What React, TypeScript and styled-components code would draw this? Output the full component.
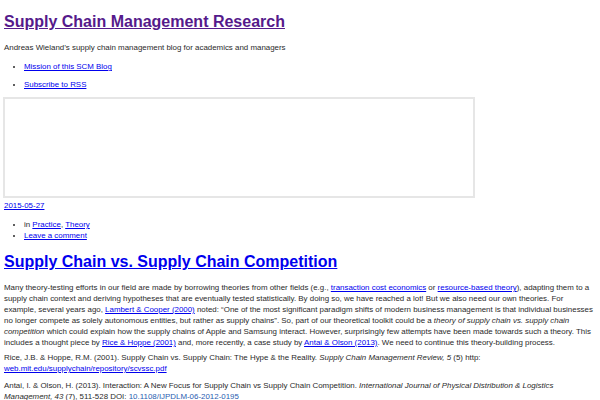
import React from "react";
import styled, { createGlobalStyle } from "styled-components";

const Global = createGlobalStyle`
  html, body { margin: 0; padding: 0; background: #fff; }
  body {
    font-family: "Liberation Sans", Arial, sans-serif;
    font-size: 7.92px;
    line-height: 11px;
    color: #2a2a2a;
  }
`;

const Page = styled.div`
  padding: 11px 4px 0 4px;
`;

const SiteTitle = styled.h1`
  margin: 0;
  font-size: 16px;
  line-height: 22px;
  font-weight: bold;
  a { color: #551a8b; text-decoration: underline; }
`;

const Tagline = styled.p`
  margin: 9px 0 0 0;
`;

const Nav = styled.ul`
  margin: 8px 0 0 0;
  padding-left: 20px;
  li { margin-bottom: 7px; }
`;

const Link = styled.a`
  color: #0000ee;
  text-decoration: underline;
`;

const Frame = styled.div`
  box-sizing: border-box;
  width: 472px;
  height: 101px;
  margin-left: -1px;
  border: 2px solid #e6e6e6;
`;

const DateLine = styled.div`
  margin-top: 2px;
`;

const Meta = styled.ul`
  margin: 8px 0 0 0;
  padding-left: 20px;
`;

const PostTitle = styled.h2`
  margin: 10px 0 0 0;
  font-size: 16px;
  line-height: 22px;
  font-weight: bold;
  a { color: #0000ee; text-decoration: underline; }
`;

const Para = styled.p<{ $gap?: number }>`
  margin: ${(p) => (p.$gap ?? 9)}px 0 0 0;
`;

const Doi = styled.a`
  color: #2a5db0;
  text-decoration: none;
`;

export default function App() {
  return (
    <>
      <Global />
      <Page>
        <SiteTitle>
          <a href="#">Supply Chain Management Research</a>
        </SiteTitle>
        <Tagline>Andreas Wieland’s supply chain management blog for academics and managers</Tagline>
        <Nav>
          <li><Link href="#">Mission of this SCM Blog</Link></li>
          <li><Link href="#">Subscribe to RSS</Link></li>
        </Nav>
        <Frame />
        <DateLine><Link href="#">2015-05-27 </Link></DateLine>
        <Meta>
          <li>in <Link href="#">Practice</Link>, <Link href="#">Theory</Link></li>
          <li><Link href="#">Leave a comment</Link></li>
        </Meta>
        <PostTitle>
          <a href="#">Supply Chain vs. Supply Chain Competition</a>
        </PostTitle>
        <Para>
          Many theory-testing efforts in our field are made by borrowing theories from other fields (e.g.,{" "}
          <Link href="#">transaction cost economics</Link> or <Link href="#">resource-based theory</Link>), adapting them
          to a supply chain context and deriving hypotheses that are eventually tested statistically. By doing so, we
          have reached a lot! But we also need our own theories. For example, several years ago,{" "}
          <Link href="#">Lambert &amp; Cooper (2000)</Link> noted: “One of the most significant paradigm shifts of
          modern business management is that individual businesses no longer compete as solely autonomous entities, but
          rather as supply chains”. So, part of our theoretical toolkit could be a{" "}
          <i>theory of supply chain vs. supply chain competition</i> which could explain how the supply chains of Apple
          and Samsung interact. However, surprisingly few attempts have been made towards such a theory. This includes
          a thought piece by <Link href="#">Rice &amp; Hoppe (2001)</Link> and, more recently, a case study by{" "}
          <Link href="#">Antai &amp; Olson (2013)</Link>. We need to continue this theory-building process.
        </Para>
        <Para $gap={4}>
          Rice, J.B. &amp; Hoppe, R.M. (2001). Supply Chain vs. Supply Chain: The Hype &amp; the Reality.{" "}
          <i>Supply Chain Management Review, 5</i> (5) http: <Link href="#">web.mit.edu/supplychain/repository/scvssc.pdf</Link>
        </Para>
        <Para $gap={6}>
          Antai, I. &amp; Olson, H. (2013). Interaction: A New Focus for Supply Chain vs Supply Chain Competition.{" "}
          <i>International Journal of Physical Distribution &amp; Logistics Management, 43</i> (7), 511-528 DOI:{" "}
          <Doi href="#">10.1108/IJPDLM-06-2012-0195</Doi>
        </Para>
      </Page>
    </>
  );
}
